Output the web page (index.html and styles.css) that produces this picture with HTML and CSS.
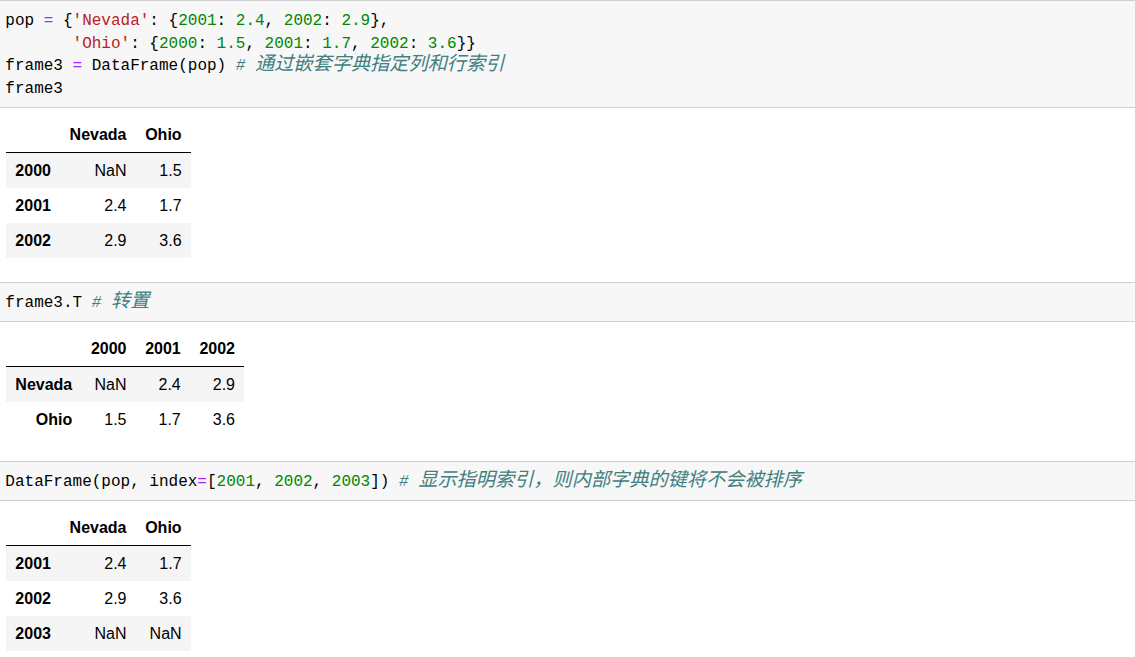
FILE: index.html
```html
<!DOCTYPE html>
<html>
<head>
<meta charset="utf-8">
<link rel="stylesheet" href="styles.css">
</head>
<body>
<div class="cell">
<pre class="code"><span>pop </span><span class="op">=</span><span> {</span><span class="str">'Nevada'</span><span>: {</span><span class="num">2001</span><span>: </span><span class="num">2.4</span><span>, </span><span class="num">2002</span><span>: </span><span class="num">2.9</span><span>},</span>
<span>       </span><span class="str">'Ohio'</span><span>: {</span><span class="num">2000</span><span>: </span><span class="num">1.5</span><span>, </span><span class="num">2001</span><span>: </span><span class="num">1.7</span><span>, </span><span class="num">2002</span><span>: </span><span class="num">3.6</span><span>}}</span>
<span>frame3 </span><span class="op">=</span><span> DataFrame(pop) </span><span class="comment"># <span class="cjk">通过嵌套字典指定列和行索引</span></span>
<span>frame3</span></pre>
</div>
<div class="output">
<table class="df">
<thead><tr><th></th><th>Nevada</th><th>Ohio</th></tr></thead>
<tbody>
<tr><th>2000</th><td>NaN</td><td>1.5</td></tr>
<tr><th>2001</th><td>2.4</td><td>1.7</td></tr>
<tr><th>2002</th><td>2.9</td><td>3.6</td></tr>
</tbody>
</table>
</div>

<div class="cell">
<pre class="code"><span>frame3.T </span><span class="comment"># <span class="cjk">转置</span></span></pre>
</div>
<div class="output">
<table class="df">
<thead><tr><th></th><th>2000</th><th>2001</th><th>2002</th></tr></thead>
<tbody>
<tr><th>Nevada</th><td>NaN</td><td>2.4</td><td>2.9</td></tr>
<tr><th>Ohio</th><td>1.5</td><td>1.7</td><td>3.6</td></tr>
</tbody>
</table>
</div>

<div class="cell">
<pre class="code"><span>DataFrame(pop, index</span><span class="op">=</span><span>[</span><span class="num">2001</span><span>, </span><span class="num">2002</span><span>, </span><span class="num">2003</span><span>]) </span><span class="comment"># <span class="cjk">显示指明索引，则内部字典的键将不会被排序</span></span></pre>
</div>
<div class="output">
<table class="df">
<thead><tr><th></th><th>Nevada</th><th>Ohio</th></tr></thead>
<tbody>
<tr><th>2001</th><td>2.4</td><td>1.7</td></tr>
<tr><th>2002</th><td>2.9</td><td>3.6</td></tr>
<tr><th>2003</th><td>NaN</td><td>NaN</td></tr>
</tbody>
</table>
</div>
</body>
</html>
```

FILE: styles.css
```css
html, body {
  margin: 0;
  padding: 0;
  background: #ffffff;
}

body {
  font-family: "Liberation Sans", Arial, sans-serif;
  color: #000;
}

.cell {
  background: #f7f7f7;
  border-top: 1px solid #cfcfcf;
  border-bottom: 1px solid #cfcfcf;
  padding: 9px 5.33px 6.34px;
}

.code {
  margin: 0;
  font-family: "Liberation Mono", "Noto Sans CJK SC", monospace;
  font-size: 16px;
  line-height: 22.67px;
  color: #000;
  white-space: pre;
}

.op { color: #aa22ff; }
.str { color: #ba2121; }
.num { color: #008800; }
.comment { color: #408080; font-style: italic; }

.cjk {
  font-family: "Noto Sans CJK SC", sans-serif;
  font-size: 19.2px;
  line-height: 0;
}

.output {
  padding: 8.5px 0 24.5px 6px;
}

.df {
  border-collapse: collapse;
  border-spacing: 0;
  font-size: 16px;
  line-height: 19px;
}

.df th,
.df td {
  padding: 8px 9.33px;
  text-align: right;
  vertical-align: middle;
  white-space: nowrap;
}

.df th {
  font-weight: bold;
}

.df thead th {
  border-bottom: 1px solid #000;
  vertical-align: bottom;
}

.df tbody tr:nth-child(odd) {
  background: #f5f5f5;
}
```
